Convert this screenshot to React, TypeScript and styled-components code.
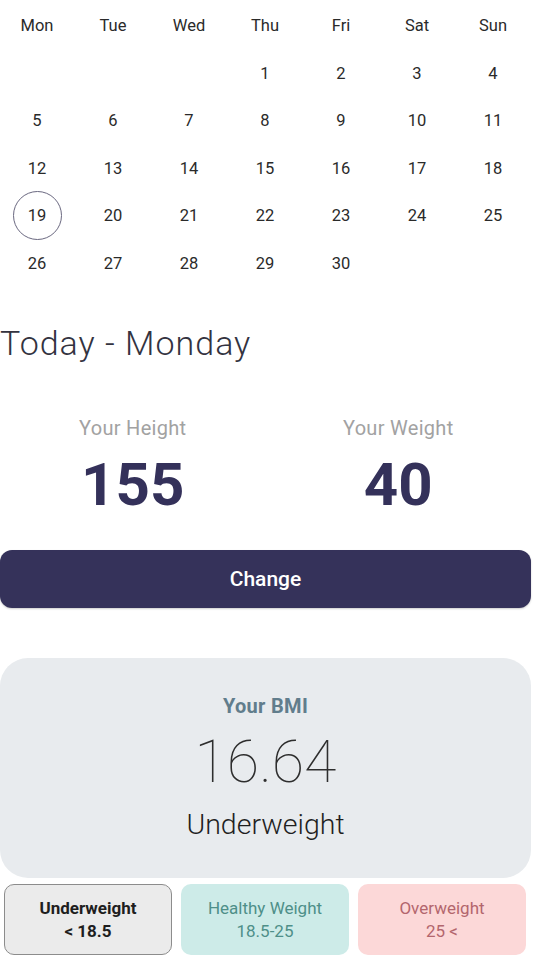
import React from 'react';
import styled, { createGlobalStyle } from 'styled-components';

const GlobalStyle = createGlobalStyle`
  html, body {
    margin: 0;
    padding: 0;
    background: #ffffff;
  }
  body {
    font-family: Roboto, "Noto Sans", "Liberation Sans", sans-serif;
    color: #222222;
  }
`;

const Page = styled.div`
  width: 531px;
  display: flex;
  flex-direction: column;
`;

const Calendar = styled.div`
  display: grid;
  grid-template-columns: repeat(7, 1fr);
  grid-auto-rows: 47.5px;
  padding-top: 2px;
  margin-left: -1px;
`;

const DayName = styled.div`
  display: flex;
  align-items: center;
  justify-content: center;
  font-size: 16.5px;
  color: #2a2a2a;
`;

const DayCell = styled.div<{ $today?: boolean }>`
  display: flex;
  align-items: center;
  justify-content: center;
  font-size: 16.5px;
  color: #2a2a2a;

  span {
    width: 49px;
    height: 49px;
    flex-shrink: 0;
    display: flex;
    align-items: center;
    justify-content: center;
    border-radius: 50%;
    box-sizing: border-box;
    border: ${p => (p.$today ? '1.5px solid #6a6880' : 'none')};
  }
`;

const Heading = styled.h1`
  margin: 34px 0 0 0;
  font-size: 34px;
  line-height: 44px;
  letter-spacing: 1px;
  font-weight: 300;
  color: #33333f;
`;

const Stats = styled.div`
  display: grid;
  grid-template-columns: 1fr 1fr;
  margin-top: 51px;
`;

const Stat = styled.div`
  display: flex;
  flex-direction: column;
  align-items: center;
`;

const StatLabel = styled.div`
  font-size: 20px;
  line-height: 24px;
  letter-spacing: 0.3px;
  color: #a2a2a2;
`;

const StatValue = styled.div`
  margin-top: 13px;
  font-size: 60px;
  line-height: 64px;
  font-weight: 700;
  color: #34315a;
`;

const ChangeButton = styled.button`
  margin-top: 33px;
  height: 58px;
  width: 100%;
  border: none;
  border-radius: 12px;
  background: #35325a;
  color: #ffffff;
  font-family: inherit;
  font-size: 21px;
  font-weight: 500;
  cursor: pointer;
  box-shadow: 0 1px 2px rgba(0, 0, 0, 0.2);
`;

const BmiCard = styled.div`
  margin-top: 50px;
  height: 220px;
  border-radius: 28px;
  background: #e8ebee;
  display: flex;
  flex-direction: column;
  align-items: center;
  padding-top: 36px;
  box-sizing: border-box;
`;

const BmiLabel = styled.div`
  font-size: 20px;
  line-height: 24px;
  letter-spacing: 0.3px;
  font-weight: 700;
  color: #617d8c;
`;

const BmiValue = styled.div`
  margin-top: 11px;
  font-size: 59px;
  line-height: 66px;
  font-weight: 100;
  color: #2e2e2e;
`;

const BmiStatus = styled.div`
  margin-top: 13px;
  font-size: 28.5px;
  line-height: 34px;
  font-weight: 300;
  color: #1f1f1f;
`;

const Ranges = styled.div`
  display: grid;
  grid-template-columns: repeat(3, 168px);
  gap: 9px;
  margin: 6px 0 0 4px;
`;

const tones = {
  under: { bg: '#ebebeb', fg: '#1e1e1e', border: '#8c8c8c' },
  healthy: { bg: '#cdebe8', fg: '#4e8f89', border: 'transparent' },
  over: { bg: '#fcd8d8', fg: '#b3666d', border: 'transparent' },
};

const RangeBox = styled.div<{ $tone: keyof typeof tones; $active?: boolean }>`
  height: 71px;
  box-sizing: border-box;
  border-radius: 10px;
  background: ${p => tones[p.$tone].bg};
  color: ${p => tones[p.$tone].fg};
  border: 1.5px solid ${p => tones[p.$tone].border};
  display: flex;
  flex-direction: column;
  align-items: center;
  justify-content: center;
  font-size: 17px;
  line-height: 23px;
  font-weight: ${p => (p.$active ? 700 : 400)};
`;

const weekDays = ['Mon', 'Tue', 'Wed', 'Thu', 'Fri', 'Sat', 'Sun'];

export default function App() {
  const cells: (number | null)[] = [null, null, null];
  for (let d = 1; d <= 30; d++) cells.push(d);

  return (
    <Page>
      <GlobalStyle />
      <Calendar>
        {weekDays.map(d => (
          <DayName key={d}>{d}</DayName>
        ))}
        {cells.map((d, i) => (
          <DayCell key={i} $today={d === 19}>
            {d !== null && <span>{d}</span>}
          </DayCell>
        ))}
      </Calendar>

      <Heading>Today - Monday</Heading>

      <Stats>
        <Stat>
          <StatLabel>Your Height</StatLabel>
          <StatValue>155</StatValue>
        </Stat>
        <Stat>
          <StatLabel>Your Weight</StatLabel>
          <StatValue>40</StatValue>
        </Stat>
      </Stats>

      <ChangeButton>Change</ChangeButton>

      <BmiCard>
        <BmiLabel>Your BMI</BmiLabel>
        <BmiValue>16.64</BmiValue>
        <BmiStatus>Underweight</BmiStatus>
      </BmiCard>

      <Ranges>
        <RangeBox $tone="under" $active>
          <div>Underweight</div>
          <div>&lt; 18.5</div>
        </RangeBox>
        <RangeBox $tone="healthy">
          <div>Healthy Weight</div>
          <div>18.5-25</div>
        </RangeBox>
        <RangeBox $tone="over">
          <div>Overweight</div>
          <div>25 &lt;</div>
        </RangeBox>
      </Ranges>
    </Page>
  );
}
